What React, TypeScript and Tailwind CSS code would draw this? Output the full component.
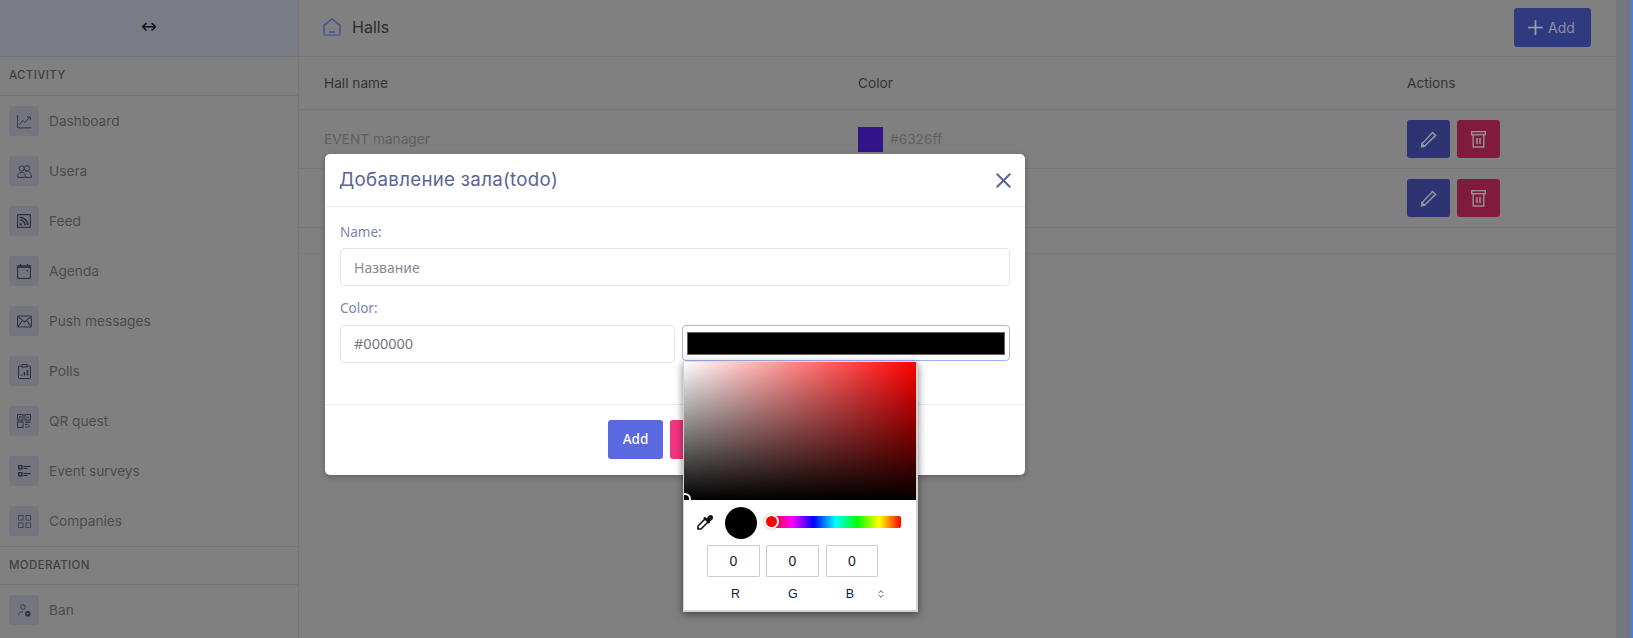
import React from "react";
import { Plus, X, ChevronsUpDown } from "lucide-react";

const FONT = "font-['Inter','Liberation_Sans',sans-serif]";
const INK = "#35353c";

function Chart() {
  return (
    <svg width="15" height="15" viewBox="0 0 15 15" fill="none" stroke={INK} strokeWidth="1">
      <path d="M0.6 1v12.9h13.8" />
      <path d="M2.5 10.5 5.5 6.5 8 8.5 13 3" />
      <path d="M10 3h3.2v3" />
    </svg>
  );
}
function People() {
  return (
    <svg width="15" height="13" viewBox="0 0 15 13" fill="none" stroke={INK} strokeWidth="1">
      <circle cx="4.6" cy="3.6" r="2.6" />
      <circle cx="10" cy="3.2" r="2.6" />
      <path d="M0.6 12.4c0-3 1.6-5 4-5s4 2 4 5H0.6Z" />
      <path d="M8.2 7c.5-.6 1.1-.9 1.9-.9 2.4 0 4.3 2.4 4.3 6.3H8.6" />
    </svg>
  );
}
function Rss() {
  return (
    <svg width="14" height="14" viewBox="0 0 14 14" fill="none" stroke="#2e2e35" strokeWidth="1.1">
      <rect x="0.6" y="0.6" width="12.8" height="12.8" />
      <path d="M2.8 3.2a8 8 0 0 1 8 8M2.8 6a5.2 5.2 0 0 1 5.2 5.2" strokeWidth="1.6" />
      <circle cx="3.8" cy="10.2" r="1.2" fill="#2e2e35" stroke="none" />
    </svg>
  );
}
function Cal() {
  return (
    <svg width="14" height="15" viewBox="0 0 14 15" fill="none" stroke="#2e2e35" strokeWidth="1.1">
      <rect x="0.6" y="1.8" width="12.8" height="12.6" />
      <path d="M0.6 3h12.8" strokeWidth="1.6" />
      <path d="M3.5 0v2M10.5 0v2" />
      <rect x="9.6" y="6" width="1.4" height="1.4" fill="#2e2e35" stroke="none" />
    </svg>
  );
}
function Envelope() {
  return (
    <svg width="15" height="13" viewBox="0 0 15 13" fill="none" stroke={INK} strokeWidth="1.1">
      <rect x="0.6" y="1" width="13.8" height="11" rx="1" />
      <path d="M0.8 1.4 7.5 7l6.7-5.6M0.8 11.7 5.5 5.5M14.2 11.7 9.5 5.5" />
    </svg>
  );
}
function Poll() {
  return (
    <svg width="13" height="15" viewBox="0 0 13 15" fill="none" stroke="#2e2e35" strokeWidth="1">
      <path d="M3.5 2H1.5a1 1 0 0 0-1 1v10.5a1 1 0 0 0 1 1h10a1 1 0 0 0 1-1V3a1 1 0 0 0-1-1H9.5" />
      <rect x="4" y="0.6" width="5" height="2.4" />
      <path d="M3.5 11.5v-1M6.5 11.5v-3.5M9.5 11.5V6" strokeWidth="1.6" />
    </svg>
  );
}
function Qr() {
  return (
    <svg width="14" height="14" viewBox="0 0 14 14" fill="none" stroke="#2e2e35" strokeWidth="0.9">
      <rect x="0.5" y="0.5" width="5.5" height="5.5" />
      <rect x="8" y="0.5" width="5.5" height="5.5" />
      <rect x="0.5" y="8" width="5.5" height="5.5" />
      <path d="M2 2l2.5 2.5M4.5 2 2 4.5M9.5 3.2h2.5M8 8.5h5.5M8 10.5h2.5M12 10.5v3M8 13h2.5" />
      <path d="M0.5 7h5.5M8 7h5.5" strokeWidth="0.6" />
    </svg>
  );
}
function Survey() {
  return (
    <svg width="13" height="12" viewBox="0 0 13 12" fill="none" stroke="#26262c" strokeWidth="1.2">
      <rect x="0.7" y="0.7" width="3.2" height="3.2" />
      <rect x="0.7" y="7.7" width="3.2" height="3.2" />
      <path d="M5.5 1.5h7M5.5 3.5h4M5.5 8.5h7M5.5 10.5h4" />
    </svg>
  );
}
function Grid4() {
  return (
    <svg width="13" height="13" viewBox="0 0 13 13" fill="none" stroke="#44444c" strokeWidth="1">
      <rect x="0.5" y="0.5" width="4.6" height="4.6" />
      <rect x="7.9" y="0.5" width="4.6" height="4.6" />
      <rect x="0.5" y="7.9" width="4.6" height="4.6" />
      <rect x="7.9" y="7.9" width="4.6" height="4.6" />
    </svg>
  );
}
function BanUser() {
  return (
    <svg width="13" height="13" viewBox="0 0 13 13" fill="none" stroke={INK} strokeWidth="0.9">
      <circle cx="5" cy="3" r="2.3" />
      <path d="M0.5 11.5c0-2.5 2-3.8 4.5-3.8" />
      <circle cx="9.8" cy="9.8" r="2.8" fill="#2e2e35" stroke="none" />
      <path d="M8.3 9.8h3" stroke="#80808a" />
    </svg>
  );
}
function Home() {
  return (
    <svg width="18" height="18" viewBox="0 0 18 18" fill="none" stroke="#3a47a0" strokeWidth="1.2">
      <path d="M1 7.2 9 1l8 6.2V17H1V7.2Z" />
      <path d="M6 14h6" />
    </svg>
  );
}
function Pen() {
  return (
    <svg width="17" height="17" viewBox="0 0 17 17" fill="none" stroke="#93959f" strokeWidth="1.5">
      <path d="M4.3 15.2 1.6 15.6 2 12.8 12.6 1.6 15.6 4.4 4.3 15.2Z" />
      <path d="M1.6 15.6 2 12.8 4.3 15.2Z" fill="#93959f" />
    </svg>
  );
}
function Bin() {
  return (
    <svg width="15" height="17" viewBox="0 0 15 17" fill="none" stroke="#9b8f95" strokeWidth="1.4">
      <rect x="0.7" y="0.7" width="13.6" height="3" />
      <path d="M2.2 3.7V16h10.6V3.7" />
      <path d="M6 7v6M9 7v6" strokeWidth="1.6" />
    </svg>
  );
}
function Dropper() {
  return (
    <svg width="17" height="17" viewBox="0 0 17 17" fill="none" stroke="#111" strokeWidth="1.6">
      <path d="M9.5 4.5 12.5 7.5 5 15H2v-3l7.5-7.5Z" />
      <path d="M8 3.5 13.5 9M11 6l2.6-3.4a1.4 1.4 0 0 1 2 2L12 8" strokeWidth="2.2" fill="#111" />
    </svg>
  );
}

const activity: [string, React.ReactNode][] = [
  ["Dashboard", <Chart />],
  ["Usera", <People />],
  ["Feed", <Rss />],
  ["Agenda", <Cal />],
  ["Push messages", <Envelope />],
  ["Polls", <Poll />],
  ["QR quest", <Qr />],
  ["Event surveys", <Survey />],
  ["Companies", <Grid4 />],
];

function NavItem({ label, icon }: { label: string; icon: React.ReactNode }) {
  return (
    <div className="flex h-[50px] items-center pl-[9px]">
      <div className="flex h-[30px] w-[30px] items-center justify-center rounded-[3px] bg-[#74757f]">{icon}</div>
      <span className="ml-[10px] text-[13.7px] text-[#4b4b4f]">{label}</span>
    </div>
  );
}

function SectionLabel({ children, className }: { children: string; className: string }) {
  return (
    <div className={`flex items-center border-b border-[#757579] pl-[9px] text-[11.5px] font-medium tracking-[0.35px] text-[#414145] ${className}`}>
      {children}
    </div>
  );
}

function TableRow({ name }: { name: string }) {
  return (
    <div className="flex h-[59px] items-center border-b border-[#77777b]">
      <div className="w-[559px] pl-[25px] text-[13.7px] text-[#5f5f5f]">{name}</div>
      <div className="flex w-[549px] items-center gap-[7px]">
        <div className="h-[25px] w-[25px] bg-[#32148a]" />
        <span className="text-[13.7px] text-[#5f5f5f]">#6326ff</span>
      </div>
      <div className="flex gap-[7px]">
        <div className="flex h-[38px] w-[43px] items-center justify-center rounded-[3px] bg-[#2d3373]">
          <Pen />
        </div>
        <div className="flex h-[38px] w-[43px] items-center justify-center rounded-[3px] bg-[#801b3e]">
          <Bin />
        </div>
      </div>
    </div>
  );
}

function ColorPicker() {
  return (
    <div className="absolute left-[683px] top-[362px] h-[250px] w-[235px] border-r-2 border-b-2 border-l border-[#d4d4d4] bg-white font-['Liberation_Sans',sans-serif] shadow-[0_2px_8px_rgba(0,0,0,0.5)]">
      <div className="relative h-[138px] overflow-hidden bg-[linear-gradient(to_top,#000,transparent),linear-gradient(to_right,#fff,#f00)]">
        <div className="absolute -bottom-[5px] -left-[5px] h-[12px] w-[12px] rounded-full border-2 border-white" />
      </div>
      <div className="relative h-[45px]">
        <div className="absolute left-[12px] top-[14px]">
          <Dropper />
        </div>
        <div className="absolute left-[41px] top-[7px] h-[32px] w-[32px] rounded-full bg-black" />
        <div className="absolute left-[86px] top-[16px] h-[12px] w-[131px] rounded-[2px] bg-[linear-gradient(to_right,#f00,#f0f,#00f,#0ff,#0f0,#ff0,#f00)]" />
        <div className="absolute left-[80px] top-[14px] h-[15px] w-[15px] rounded-full border-2 border-white bg-[#f00] shadow-[0_0_2px_rgba(0,0,0,0.4)]" />
      </div>
      <div className="flex gap-[6px] pl-[23px]">
        <div className="flex h-[32px] w-[53px] items-center justify-center rounded-[1px] border border-[#ccc] text-[14px] text-[#222]">0</div>
        <div className="flex h-[32px] w-[53px] items-center justify-center rounded-[1px] border border-[#ccc] text-[14px] text-[#222]">0</div>
        <div className="ml-[1px] flex h-[32px] w-[52px] items-center justify-center rounded-[1px] border border-[#ccc] text-[14px] text-[#222]">0</div>
      </div>
      <div className="relative mt-[8px] flex text-[12.5px] text-[#0a1a44]">
        <span className="ml-[47px]">R</span>
        <span className="ml-[48px]">G</span>
        <span className="ml-[48px]">B</span>
        <ChevronsUpDown size={10} strokeWidth={2} color="#333" className="ml-[22px] mt-[4px]" />
      </div>
    </div>
  );
}

export default function App() {
  return (
    <div className={`relative flex h-[638px] w-[1633px] overflow-hidden bg-[#808080] ${FONT}`}>
      <aside className="w-[299px] shrink-0 border-r border-[#76767a]">
        <div className="flex h-[57px] items-center justify-center border-b border-[#757579] bg-[#797b87] pb-[3px] text-[13px] font-bold leading-none text-[#111]">
          ↔
        </div>
        <SectionLabel className="h-[39px]">ACTIVITY</SectionLabel>
        <div>
          {activity.map(([l, i]) => (
            <NavItem key={l} label={l} icon={i} />
          ))}
        </div>
        <SectionLabel className="h-[39px] border-t">MODERATION</SectionLabel>
        <NavItem label="Ban" icon={<BanUser />} />
      </aside>

      <main className="flex-1">
        <div className="flex h-[57px] items-center border-b border-[#77777b] pb-[2px] pl-[24px]">
          <Home />
          <span className="mb-[1px] ml-[11px] text-[16px] text-[#2b2b33]">Halls</span>
          <div className="ml-auto mr-[25px] flex h-[39px] w-[77px] items-center gap-[1px] rounded-[3px] bg-[#2f3a80] pl-[10px] text-[14px] text-[#8e919e]">
            <Plus size={23} strokeWidth={1.8} color="#9b9ea9" />
            Add
          </div>
        </div>
        <div className="flex h-[53px] items-center border-b border-[#77777b] text-[13.7px] text-[#333338]">
          <div className="w-[559px] pl-[25px]">Hall name</div>
          <div className="w-[549px]">Color</div>
          <div>Actions</div>
        </div>
        <TableRow name="EVENT manager" />
        <TableRow name="" />
        <div className="h-[26px] border-b border-[#7b7b7b]" />
      </main>

      <div className="relative w-[17px] shrink-0 bg-[#75767e]">
        <div className="absolute inset-y-0 right-0 w-[2px] bg-[#4a7de0]" />
      </div>

      <div className="absolute left-[325px] top-[154px] flex h-[321px] w-[700px] flex-col rounded-[5px] bg-white font-['Noto_Sans',sans-serif] shadow-[0_2px_6px_rgba(0,0,0,0.25)]">
        <div className="flex h-[53px] shrink-0 items-center justify-between border-b border-[#ececf2] pl-[14px] pr-[9px]">
          <span className="font-['Inter',sans-serif] text-[18.7px] tracking-[0.3px] text-[#5a6397]">Добавление зала(todo)</span>
          <X size={25} strokeWidth={1.9} color="#5a6397" />
        </div>
        <div className="h-[198px] shrink-0 border-b border-[#ececf2] px-[15px] pt-[12px]">
          <div className="h-[26px] text-[13.5px] leading-[26px] text-[#7d84aa]">Name:</div>
          <div className="mt-[3px] flex h-[38px] items-center rounded-[4px] border border-[#e4e4ee] pl-[13px] text-[14px] text-[#8a8a96]">Название</div>
          <div className="mt-[9px] h-[26px] text-[13.5px] leading-[26px] text-[#7d84aa]">Color:</div>
          <div className="mt-[4px] flex items-start gap-[7px]">
            <div className="flex h-[38px] w-[335px] items-center rounded-[4px] border border-[#e4e4ee] pl-[13px] text-[14.5px] text-[#77777f]">#000000</div>
            <div className="flex h-[36px] flex-1 items-center rounded-[4px] border border-[#a6b0f5] px-[4px]">
              <div className="h-[23px] w-full border border-[#666] bg-black" />
            </div>
          </div>
        </div>
        <div className="flex flex-1 items-start gap-[7px] pl-[283px] pt-[15px]">
          <div className="flex h-[39px] w-[55px] items-center justify-center rounded-[3px] bg-[#5b69e0] text-[13.5px] font-medium text-white">Add</div>
          <div className="h-[39px] w-[60px] rounded-[3px] bg-[#f5347f]" />
        </div>
      </div>

      <ColorPicker />
    </div>
  );
}
